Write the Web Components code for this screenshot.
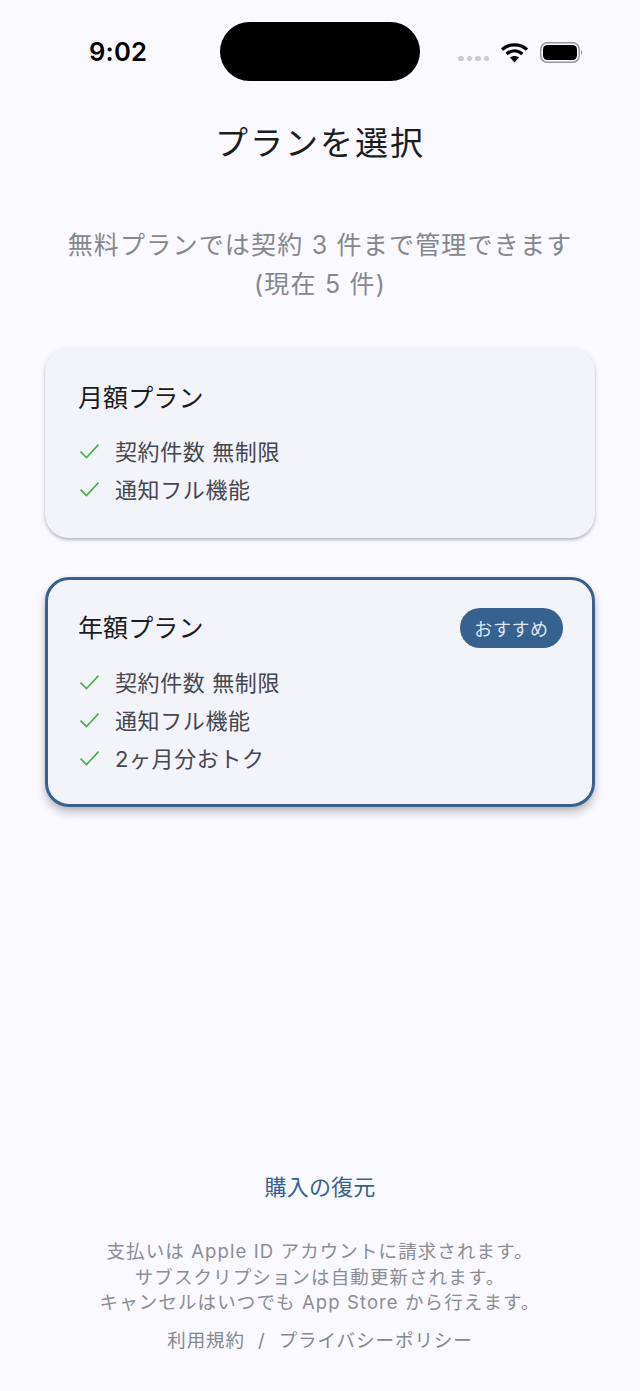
<!DOCTYPE html>
<html lang="ja"><head><meta charset="utf-8"><style>
html,body{margin:0;padding:0;background:#f9f9ff}
body{width:640px;height:1391px;overflow:hidden;font-family:"Inter","Noto Sans CJK JP",sans-serif}
</style></head><body>
<plan-page></plan-page>
<template id="status-t"><style>
:host{display:block;height:105px;position:relative}
.row{display:flex;align-items:center;justify-content:space-between;padding:22px 56px 0 89px;height:60px;box-sizing:content-box}
.time{font:600 25.6px/30px "Inter",sans-serif;color:#000;letter-spacing:.2px}
.island{position:absolute;left:220px;top:22px;width:200px;height:59px;border-radius:30px;background:#000}
.icons{display:flex;align-items:center;gap:12px}
.dots{display:flex;gap:3px;margin-top:13px}
.dots i{width:5.5px;height:5.5px;border-radius:50%;background:#c9c9ce}
</style><div class="row"><span class="time">9:02</span><div class="icons">
<div class="dots"><i></i><i></i><i></i><i></i></div>
<svg width="27" height="21" viewBox="0 0 27 21"><path d="M1 7.5C8 1.2 19 1.2 26 7.5" fill="none" stroke="#000" stroke-width="3.3"/><path d="M5.6 12C10.5 7.8 16.5 7.8 21.4 12" fill="none" stroke="#000" stroke-width="3.3"/><path d="M9 15.6C11.5 13.6 15.5 13.6 18 15.6L13.5 20.5Z" fill="#000"/></svg>
<svg width="44" height="21" viewBox="0 0 44 21"><rect x=".75" y=".75" width="38.5" height="19.5" rx="6.5" fill="none" stroke="#97979b" stroke-width="1.5"/><rect x="3" y="3" width="34" height="15" rx="4.5" fill="#000"/><path d="M41 8c1.7.4 1.7 4.6 0 5z" fill="#97979b"/></svg>
</div></div><div class="island"></div></template>
<template id="check-t"><style>
:host{display:flex;align-items:center;gap:15px;height:38.4px;font-size:22px;color:#44474e;letter-spacing:.6px;font-weight:400}
svg{flex:none;width:22px;height:22px}
</style><svg viewBox="0 0 22 22"><path d="M2.5 12.6l6 6L20.5 5.6" fill="none" stroke="#4caf50" stroke-width="1.7"/></svg><span><slot></slot></span></template>
<template id="card-t"><style>
:host{display:block;box-sizing:border-box;border-radius:24px;background:#f3f3fa;padding:var(--pad,29px 33px 30.7px);box-shadow:0 2px 3px rgba(0,0,0,.22),0 1px 6px rgba(0,0,0,.08);margin:0 45px}
:host([selected]){border:3px solid #37618e;box-shadow:0 6px 10px rgba(0,0,0,.2),0 2px 5px rgba(0,0,0,.1);--pad:28px 29px 27.3px 30px}
.head{display:flex;justify-content:space-between;align-items:center;height:40px;margin-bottom:13.5px;font-size:25px;color:#1a1c20;letter-spacing:.1px}
.title{padding-bottom:3px}
</style><div class="head"><span class="title"><slot name="title"></slot></span><slot name="badge"></slot></div><slot></slot></template>
<template id="badge-t"><style>
:host{display:flex;align-items:center;justify-content:center;background:#37618e;color:#dfe7f2;font-size:18px;letter-spacing:.6px;height:40px;width:103px;border-radius:20px}
</style><slot></slot></template>
<template id="page-t"><style>
:host{display:flex;flex-direction:column;height:1391px;font-family:"Inter","Noto Sans CJK JP",sans-serif}
h1{margin:0;text-align:center;font-weight:400;font-size:33px;line-height:44px;letter-spacing:2px;color:#1a1c20;height:44px;margin-top:16px}
.sub{margin:60.5px 0 0;text-align:center;font-size:25px;line-height:39.5px;color:#85878c;letter-spacing:1.2px}
.cards{display:flex;flex-direction:column;gap:39px;margin-top:43.5px}
.foot{margin-top:auto;text-align:center;padding-bottom:37px}
.restore{color:#37618e;font-size:22px;line-height:30px;letter-spacing:.2px;margin-bottom:37.5px}
.legal{font-size:18.5px;line-height:25.5px;color:#8b8d92;letter-spacing:1.1px}
.links{margin-top:11.5px;font-size:18.5px;line-height:27px;color:#85878c;letter-spacing:.95px;display:flex;justify-content:center;gap:13px}
</style>
<status-bar></status-bar>
<h1>プランを選択</h1>
<p class="sub">無料プランでは契約 3 件まで管理できます<br>(現在 5 件)</p>
<div class="cards">
<plan-card><span slot="title">月額プラン</span><check-row>契約件数 無制限</check-row><check-row>通知フル機能</check-row></plan-card>
<plan-card selected><span slot="title">年額プラン</span><plan-badge slot="badge">おすすめ</plan-badge><check-row>契約件数 無制限</check-row><check-row>通知フル機能</check-row><check-row>2ヶ月分おトク</check-row></plan-card>
</div>
<div class="foot"><div class="restore">購入の復元</div>
<div class="legal">支払いは Apple ID アカウントに請求されます。<br>サブスクリプションは自動更新されます。<br>キャンセルはいつでも App Store から行えます。</div>
<div class="links"><span>利用規約</span><span>/</span><span>プライバシーポリシー</span></div></div>
</template>
<script>
function def(name,id){customElements.define(name,class extends HTMLElement{constructor(){super();this.attachShadow({mode:"open"}).appendChild(document.getElementById(id).content.cloneNode(true))}})}
def("status-bar","status-t");def("check-row","check-t");def("plan-badge","badge-t");def("plan-card","card-t");def("plan-page","page-t");
</script>
</body></html>
